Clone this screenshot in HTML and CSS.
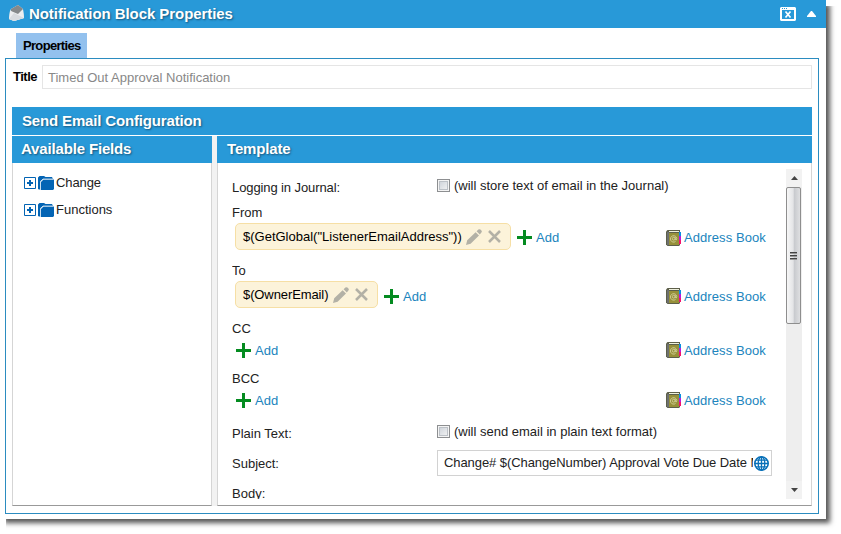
FILE: index.html
```html
<!DOCTYPE html>
<html lang="en">
<head>
<meta charset="utf-8">
<title>Notification Block Properties</title>
<link rel="stylesheet" href="styles.css">
</head>
<body>
<svg width="0" height="0" class="defs">
  <defs>
    <symbol id="plus" viewBox="0 0 15 15"><path d="M6 0h3v6h6v3H9v6H6V9H0V6h6z" fill="#048b20"/></symbol>
    <symbol id="pencil" viewBox="0 0 16 16"><path d="M0 16l1.200-4.800L9.600 3.200l3.400 3.400-8.400 8.200zM10.600 2.300L12.400.6q1-.9 2 0l1 1q.9 1 0 1.900L13.800 5.400z" fill="#b3b1a6"/></symbol>
    <symbol id="cross" viewBox="0 0 13 13"><path d="M1 1l11 11M12 1L1 12" stroke="#b3b1a6" stroke-width="2.500" fill="none"/></symbol>
    <symbol id="book" viewBox="0 0 15 16">
      <path d="M1.500 0H14v15l-1 1H1.500L0 14.500v-13z" fill="#5d5f4a"/>
      <path d="M1 2h2v13H1z" fill="#6d7070"/>
      <path d="M3 1h10v1H3z" fill="#eef0dc"/>
      <path d="M3 3h10v12H3z" fill="#96903a"/>
      <path d="M13 2h2v4h-2z" fill="#0a8ee0"/><path d="M13 6h2v4h-2z" fill="#b718dc"/><path d="M13 10h2v4h-2z" fill="#f3126d"/>
      <path d="M9.300 7.200v2.500q1.500 1 1.500-1.200A3.200 3.200 0 1 0 9.500 11.500" fill="none" stroke="#d5d19b" stroke-width=".9"/>
      <circle cx="7.700" cy="8.700" r="1.400" fill="none" stroke="#d5d19b" stroke-width=".9"/>
    </symbol>
    <symbol id="folder" viewBox="0 0 16 14"><path d="M0 13V1.500L1.500 0H6l1.500 1H14l1 2H5L2.500 5v8.500H1z" fill="#0364b4"/><path d="M3 14V6l2.500-2.500H16V13l-1 1z" fill="#0364b4"/><path d="M2.500 13.500V5.500L5 3h10.500" fill="none" stroke="#d9e8f5" stroke-width=".8"/></symbol>
    <symbol id="expand" viewBox="0 0 12 12"><path d="M.5.5h11v11H.5z" fill="#fff" stroke="#0364b4"/><path d="M5 3h2v2h2v2H7v2H5V7H3V5h2z" fill="#0364b4"/></symbol>
  </defs>
</svg>
<main class="window">
  <header class="titlebar">
    <svg class="mail" width="16" height="16" viewBox="0 0 16 16"><path d="M1 6l1-2 7-4 5 4 1 9-10 3-5-2z" fill="#eceef0"/><path d="M2 4l7-4 5 4-5 5-7-3z" fill="#85898b"/><path d="M1 6l8 4 5-5 1 8-10 3-5-2z" fill="#eceef0"/><path d="M0 14l5-6 4 2 6 3-10 3z" fill="#d8dce0"/></svg>
    <h1>Notification Block Properties</h1>
    <svg class="close" width="16" height="14" viewBox="0 0 16 14"><path d="M1 0h14l1 1v12l-1 1H1l-1-1V1z" fill="#fff"/><path d="M2 3h12v9H2zM2 1h1v1H2zM4 1h1v1H4zM6 1h1v1H6z" fill="#2899d8"/><path d="M5.500 4.500l5 6M10.500 4.500l-5 6" stroke="#fff" stroke-width="1.700"/></svg>
    <svg class="collapse" width="9" height="6" viewBox="0 0 9 6"><path d="M0 6V5l4-5h1l4 5v1z" fill="#fff"/></svg>
  </header>
  <nav class="tabs"><span class="tab">Properties</span></nav>
  <section class="props">
    <div class="title-row"><label>Title</label><div class="title-input">Timed Out Approval Notification</div></div>
    <h2 class="bar">Send Email Configuration</h2>
    <div class="columns">
      <div class="panel">
        <h2 class="bar">Available Fields</h2>
        <div class="tree">
          <div class="node"><svg width="12" height="12"><use href="#expand"/></svg><svg class="folder" width="16" height="14"><use href="#folder"/></svg><span class="node-name tight">Change</span></div>
          <div class="node"><svg width="12" height="12"><use href="#expand"/></svg><svg class="folder" width="16" height="14"><use href="#folder"/></svg><span class="node-name">Functions</span></div>
        </div>
      </div>
      <div class="panel">
        <h2 class="bar">Template</h2>
        <div class="scroller">
          <div class="form">
            <div class="row log"><span class="name tight">Logging in Journal:</span><i class="check"></i><span class="note">(will store text of email in the Journal)</span></div>
            <div class="row label">From</div>
            <div class="row field chips">
              <div class="chip from"><span>$(GetGlobal("ListenerEmailAddress"))</span><svg class="pencil" width="16" height="16"><use href="#pencil"/></svg><svg width="13" height="13"><use href="#cross"/></svg></div>
              <a class="add"><svg width="15" height="15"><use href="#plus"/></svg><span>Add</span></a>
              <a class="address"><svg width="15" height="16"><use href="#book"/></svg><span>Address Book</span></a>
            </div>
            <div class="row label">To</div>
            <div class="row field chips">
              <div class="chip to"><span class="tight">$(OwnerEmail)</span><svg class="pencil" width="16" height="16"><use href="#pencil"/></svg><svg width="13" height="13"><use href="#cross"/></svg></div>
              <a class="add"><svg width="15" height="15"><use href="#plus"/></svg><span>Add</span></a>
              <a class="address"><svg width="15" height="16"><use href="#book"/></svg><span>Address Book</span></a>
            </div>
            <div class="row label">CC</div>
            <div class="row field"><a class="add"><svg width="15" height="15"><use href="#plus"/></svg><span>Add</span></a><a class="address"><svg width="15" height="16"><use href="#book"/></svg><span>Address Book</span></a></div>
            <div class="row label">BCC</div>
            <div class="row field"><a class="add"><svg width="15" height="15"><use href="#plus"/></svg><span>Add</span></a><a class="address"><svg width="15" height="16"><use href="#book"/></svg><span>Address Book</span></a></div>
            <div class="row plain"><span class="name">Plain Text:</span><i class="check"></i><span class="note">(will send email in plain text format)</span></div>
            <div class="row subject"><span class="name">Subject:</span><div class="subject-input"><span class="subject-text">Change# $(ChangeNumber) Approval Vote Due Date Missed</span><svg width="15" height="15" viewBox="0 0 15 15" fill="none" stroke="#0870b8" stroke-width="1.300"><circle cx="7.500" cy="7.500" r="6.700" stroke-width="1.600"/><ellipse cx="7.500" cy="7.500" rx="3.300" ry="6.700"/><path d="M7.500 1v13M1 7.500h13M2 4.200h11M2 10.800h11"/></svg></div></div>
            <div class="row body-row">Body:</div>
          </div>
          <div class="scrollbar"><div class="arrow"><svg width="7" height="4"><path d="M0 4L3.500 0 7 4z" fill="#444"/></svg></div><div class="thumb"><i></i><i></i><i></i></div><div class="arrow down"><svg width="7" height="4"><path d="M0 0h7L3.500 4z" fill="#444"/></svg></div></div>
        </div>
      </div>
    </div>
  </section>
</main>
</body>
</html>
```
FILE: styles.css
```css
* { box-sizing: border-box; }
body { margin: 0; width: 841px; height: 534px; overflow: hidden; background: #fff; color: #222; font: 13px/18px "Liberation Sans", Arial, sans-serif; }
svg { display: block; flex: none; }
.defs { position: absolute; }
h1, h2 { margin: 0; color: #fff; font-size: 15px; font-weight: bold; white-space: nowrap; text-shadow: 1px 1px 2px #17577d; letter-spacing: -.16px; }
h1 { letter-spacing: -.07px; }
.window { width: 826px; height: 519px; background: #fff; display: flex; flex-direction: column; box-shadow: 4px 4px 5px #555; clip-path: polygon(0 0, 100% 0, 100% 6px, 850px 6px, 850px 540px, 6px 540px, 6px 100%, 0 100%); }
.titlebar { height: 28px; display: flex; align-items: center; background: #2899d8; padding: 0 10px 0 9px; }
.mail { margin: -2px 4px 0 0; }
.close { margin-left: auto; }
.collapse { margin-left: 11px; }
.tabs { height: 30px; padding: 5px 0 0 16px; display: flex; }
.tab { width: 71px; height: 25px; background: #93c1ee; color: #000; font-weight: bold; line-height: 25px; padding-left: 7px; letter-spacing: -.68px; }
.props { width: 814px; height: 456px; margin-left: 5px; border: 1px solid #2b8cc0; padding: 6px; }
.title-row { display: flex; align-items: center; height: 24px; color: #000; font-weight: bold; padding-left: 1px; margin-bottom: 18px; }
.title-row label { width: 29px; letter-spacing: -.5px; }
.title-input { width: 770px; height: 24px; line-height: 23px; border: 1px solid #e5e5e5; padding-left: 5px; color: #888; font-weight: normal; }
.bar { height: 28px; line-height: 27px; padding-left: 10px; background: #2899d8; }
.columns { margin-top: 1px; height: 370px; display: grid; grid-template-columns: 200px 595px; gap: 5px; background: #f2f2f2; }
.panel { background: #fff; border: 1px solid #d5d5d5; border-top: 0; border-bottom-color: #999; }
.panel .bar { height: 27px; line-height: 26px; margin: 0 -1px; }
.panel:first-child .bar { padding-left: 9px; }
.tree { padding: 6px 0 0 11px; }
.node { height: 27px; display: flex; align-items: center; }
.node-name { line-height: 16px; }
.folder { margin: 0 2px; }
.tight { letter-spacing: -.1px; }
.scroller { height: 330px; margin: 6px 9px 0 14px; display: flex; overflow: hidden; }
.form { width: 540px; height: 340px; flex: none; }
.row { height: 18px; display: flex; align-items: center; white-space: nowrap; }
.name { width: 205px; }
.log { height: 36px; }
.log .name { margin-top: 2px; }
.log .check, .log .note { margin-top: -3px; }
.check { width: 13px; height: 13px; flex: none; border: 1px solid #8d8f91; background: linear-gradient(135deg, #c8ced6, #f7f7f7); box-shadow: inset 0 0 0 1px #f4f4f4, inset 0 0 0 2px #bcc1c7; margin-right: 4px; }
.label { margin-top: -1px; }
.field { margin: 3px 0 11px; padding-left: 4px; }
.field .add span, .field .address span { padding-top: 1px; }
.field + .label { margin-top: 0; }
.chips { height: 27px; margin: 1px 0 12px; padding-left: 3px; }
.chips .add, .chips .address { padding-top: 2px; }
.chips ~ .chips { margin-bottom: 12px; }
.chips ~ .chips .add, .chips ~ .chips .address { padding-top: 3px; }
.chip { height: 27px; display: flex; align-items: center; background: #fcf3da; border: 1px solid #f6dfa5; border-radius: 5px; color: #000; padding: 0 8px 0 7px; margin-right: 6px; }
.from { width: 276px; }
.to { width: 143px; }
.to .pencil { margin-left: 5px; }
.pencil { margin: 0 6px 0 4px; }
.add, .address { display: flex; align-items: center; gap: 4px; color: #2084bd; }
.address { width: 101px; gap: 3px; margin-left: auto; margin-right: 5px; letter-spacing: .08px; }
.plain { height: 36px; margin-top: -5px; margin-bottom: -3px; }
.plain .name { margin-top: 1px; }
.plain .check, .plain .note { margin-top: -3px; }
.subject { height: 30px; margin-bottom: 6px; }
.subject-input { width: 335px; height: 26px; border: 1px solid #d2d2d2; display: flex; align-items: center; padding: 0 2px 0 6px; }
.subject .name { padding-top: 1px; }
.subject-text { width: 309px; overflow: hidden; margin-right: 1px; letter-spacing: -.075px; }
.body-row { padding-top: 1px; }
.scrollbar { width: 16px; margin-left: 14px; background: #eee; display: flex; flex-direction: column; }
.arrow { height: 18px; display: flex; align-items: center; justify-content: center; background: #f2f2f2; }
.down { margin-top: auto; }
.thumb { width: 15px; height: 137px; border: 1px solid #8e8e8e; border-radius: 2px; background: linear-gradient(90deg, #f7f7f7, #e3e4e6 48%, #c8cace 55%, #dedfe1); display: flex; flex-direction: column; align-items: center; justify-content: center; gap: 1px; }
.thumb i { width: 7px; height: 2px; border-bottom: 1px solid #999; background: #444; }
```
